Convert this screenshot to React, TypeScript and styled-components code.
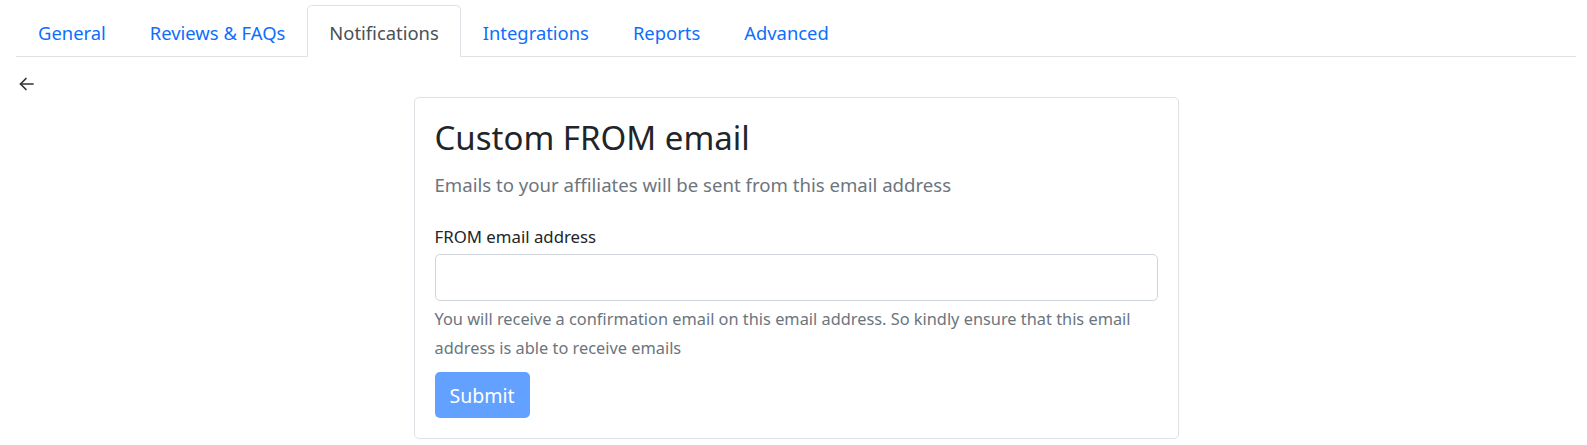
import React from 'react';
import styled, { createGlobalStyle } from 'styled-components';

const GlobalStyle = createGlobalStyle`
  html, body {
    margin: 0;
    padding: 0;
    background: #fff;
  }
  body {
    font-family: "Noto Sans", "Open Sans", sans-serif;
    color: #212529;
  }
  * {
    box-sizing: border-box;
  }
`;

const Page = styled.div`
  padding: 5px 11px 0 16px;
`;

// 상단 탭 메뉴
const Tabs = styled.ul`
  display: flex;
  list-style: none;
  margin: 0;
  padding: 0;
  border-bottom: 1px solid #dee2e6;
`;

const Tab = styled.li<{ $active?: boolean }>`
  margin-bottom: -1px;
  padding: 11px 21px 8px;
  font-size: 18.4px;
  line-height: 31px;
  cursor: pointer;
  border: 1px solid ${(p) => (p.$active ? '#dee2e6' : 'transparent')};
  border-bottom-color: ${(p) => (p.$active ? '#fff' : 'transparent')};
  border-radius: 5px 5px 0 0;
  background: ${(p) => (p.$active ? '#fff' : 'transparent')};
  color: ${(p) => (p.$active ? '#495057' : '#0d6efd')};
`;

const BackRow = styled.div`
  height: 40px;
  display: flex;
  align-items: flex-start;
  padding: 20px 0 0 3px;
  color: #333;
`;

const Card = styled.div`
  width: 765px;
  margin: 0 auto;
  border: 1px solid #dee2e6;
  border-radius: 5px;
  padding: 20px;
`;

const Title = styled.h2`
  margin: 0;
  font-size: 33px;
  font-weight: 400;
  line-height: 40px;
`;

const Subtitle = styled.p`
  margin: 12px 0 0;
  font-size: 18.6px;
  line-height: 29px;
  color: #6c757d;
`;

const Label = styled.label`
  display: block;
  margin-top: 23px;
  font-size: 16.8px;
  line-height: 29px;
`;

const Input = styled.input`
  display: block;
  width: 100%;
  height: 47px;
  margin-top: 3px;
  border: 1px solid #ced4da;
  border-radius: 5px;
  padding: 6px 14px;
  font-size: 18px;
  font-family: inherit;
  outline: none;
`;

const HelpText = styled.div`
  margin-top: 4px;
  font-size: 16.35px;
  line-height: 29px;
  color: #6c757d;
`;

const SubmitButton = styled.button`
  display: block;
  margin-top: 9px;
  height: 46px;
  padding: 0 15px;
  border: none;
  border-radius: 5px;
  background: #62a1ff;
  color: #fff;
  font-family: inherit;
  font-size: 19.5px;
`;

const tabs = ['General', 'Reviews & FAQs', 'Notifications', 'Integrations', 'Reports', 'Advanced'];

const App: React.FC = () => {
  return (
    <Page>
      <GlobalStyle />
      <Tabs>
        {tabs.map((t) => (
          <Tab key={t} $active={t === 'Notifications'}>
            {t}
          </Tab>
        ))}
      </Tabs>
      <BackRow>
        <svg width="15" height="14" viewBox="0 0 15 14" fill="none" stroke="#333" strokeWidth="1.7" strokeLinecap="round" strokeLinejoin="round">
          <path d="M14 7H1.5" />
          <path d="M7 1.5L1.5 7L7 12.5" />
        </svg>
      </BackRow>
      <Card>
        <Title>Custom FROM email</Title>
        <Subtitle>Emails to your affiliates will be sent from this email address</Subtitle>
        <Label htmlFor="from-email">FROM email address</Label>
        <Input id="from-email" type="email" />
        <HelpText>
          You will receive a confirmation email on this email address. So kindly ensure that this email
          address is able to receive emails
        </HelpText>
        <SubmitButton disabled>Submit</SubmitButton>
      </Card>
    </Page>
  );
};

export default App;
